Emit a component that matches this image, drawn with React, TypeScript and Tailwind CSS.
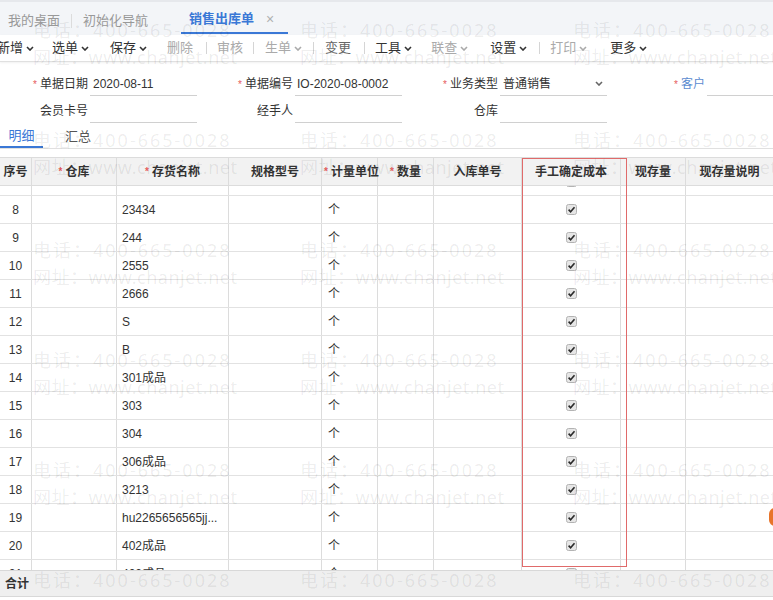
import React from "react";

const FONT = { fontFamily: '"Liberation Sans", "Noto Sans CJK SC", sans-serif' };

function Chevron({ className = "" }: { className?: string }) {
  return (
    <svg width="8" height="5" viewBox="0 0 8 5" className={`shrink-0 ${className}`}>
      <path d="M1 1 L4 4 L7 1" stroke="currentColor" strokeWidth="1.6" fill="none" />
    </svg>
  );
}

function Check() {
  return (
    <svg width="11" height="11" viewBox="0 0 11 11">
      <rect x="0.5" y="0.5" width="10" height="10" rx="2" fill="#e6e6e6" stroke="#b3b3b3" />
      <path d="M2.6 5.6 L4.6 7.7 L8.5 3.2" stroke="#2a2a2a" strokeWidth="1.6" fill="none" />
    </svg>
  );
}

const rows = [
  { n: 7, name: "2222" },
  { n: 8, name: "23434" },
  { n: 9, name: "244" },
  { n: 10, name: "2555" },
  { n: 11, name: "2666" },
  { n: 12, name: "S" },
  { n: 13, name: "B" },
  { n: 14, name: "301成品" },
  { n: 15, name: "303" },
  { n: 16, name: "304" },
  { n: 17, name: "306成品" },
  { n: 18, name: "3213" },
  { n: 19, name: "hu2265656565jj..." },
  { n: 20, name: "402成品" },
  { n: 21, name: "402成品" },
];

const GRID = "grid grid-cols-[32px_85px_112px_93px_56px_56px_88px_99px_65px_87px]";

function Star() {
  return <span className="text-[#e65c5c] mr-[3px] text-[10px]">*</span>;
}

function Watermark() {
  const cols = [33, 300, 573];
  const items: { x: number; y: number; t: string; wide: boolean }[] = [];
  for (let r = 0; r < 6; r++) {
    for (const x of cols) {
      items.push({ x, y: 30 + 110 * r - 12, t: "电话：400-665-0028", wide: true });
      if (r < 5) items.push({ x, y: 57 + 110 * r - 12, t: "网址：www.chanjet.net", wide: false });
    }
  }
  return (
    <div className="absolute inset-0 pointer-events-none overflow-hidden">
      {items.map((it, i) => (
        <div
          key={i}
          className={
            it.wide
              ? "absolute whitespace-nowrap text-[18px] leading-[24px] tracking-[2px] text-[rgba(0,0,0,0.08)]"
              : "absolute whitespace-nowrap text-[18px] leading-[24px] tracking-[0.5px] text-[rgba(0,0,0,0.08)]"
          }
          style={{ left: it.x, top: it.y, fontFamily: '"Noto Sans", "Noto Sans CJK SC", sans-serif' }}
        >
          {it.t}
        </div>
      ))}
    </div>
  );
}

export default function App() {
  return (
    <div className="relative w-[773px] h-[600px] overflow-hidden bg-white text-[#333]" style={FONT}>
      {/* Tab bar */}
      <div className="h-[35px] bg-[#f3f5f8] border-t-[2px] border-[#e6e8ec] flex items-stretch text-[13px] whitespace-nowrap">
        <div className="flex items-center pt-[4px] ml-[8px] text-[#999]">我的桌面</div>
        <div className="flex items-center pt-[4px] ml-[11px]">
          <div className="w-px h-[14px] bg-[#dcdcdc]" />
        </div>
        <div className="flex items-center pt-[4px] ml-[11px] text-[#999]">初始化导航</div>
        <div className="ml-[33px] w-[107px] shrink-0 flex items-center pt-[4px] pl-[8px] border-b-2 border-[#3a78d6] mb-[1px]">
          <span className="text-[#3a78d6] font-bold">销售出库单</span>
          <span className="ml-[12px] text-[#b0b0b0] text-[14px]">×</span>
        </div>
      </div>

      {/* Toolbar */}
      <div className="h-[27px] bg-white border-b border-[#e0e0e0] shadow-[0_1px_2px_rgba(0,0,0,0.06)] flex items-center text-[13px] whitespace-nowrap">
        <span className="-ml-[3px] flex items-center">新增<Chevron className="ml-[3px]" /></span>
        <span className="ml-[18px] flex items-center">选单<Chevron className="ml-[3px]" /></span>
        <span className="ml-[21px] flex items-center">保存<Chevron className="ml-[3px]" /></span>
        <span className="ml-[20px] text-[#aaa]">删除</span>
        <span className="ml-[13px] w-px h-[12px] bg-[#d5d5d5]" />
        <span className="ml-[10px] text-[#aaa]">审核</span>
        <span className="ml-[10px] w-px h-[12px] bg-[#d5d5d5]" />
        <span className="ml-[11px] flex items-center text-[#aaa]">生单<Chevron className="ml-[3px]" /></span>
        <span className="ml-[11px] w-px h-[12px] bg-[#d5d5d5]" />
        <span className="ml-[11px] text-[#666]">变更</span>
        <span className="ml-[13px] w-px h-[12px] bg-[#d5d5d5]" />
        <span className="ml-[10px] flex items-center">工具<Chevron className="ml-[3px]" /></span>
        <span className="ml-[19px] flex items-center text-[#aaa]">联查<Chevron className="ml-[3px]" /></span>
        <span className="ml-[22px] flex items-center">设置<Chevron className="ml-[3px]" /></span>
        <span className="ml-[12px] w-px h-[12px] bg-[#d5d5d5]" />
        <span className="ml-[10px] flex items-center text-[#aaa]">打印<Chevron className="ml-[3px]" /></span>
        <span className="ml-[23px] flex items-center">更多<Chevron className="ml-[3px]" /></span>
      </div>

      {/* Form */}
      <div className="pt-[10px] flex flex-col gap-[3px] text-[12px] whitespace-nowrap">
        <div className="h-[24px] flex">
          <div className="w-[88px] shrink-0 flex items-center justify-end"><Star />单据日期</div>
          <div className="ml-[2px] w-[107px] shrink-0 border-b border-[#d0d0d0] flex items-center pl-[3px]">2020-08-11</div>
          <div className="w-[96px] shrink-0 flex items-center justify-end"><Star />单据编号</div>
          <div className="ml-[2px] w-[107px] shrink-0 border-b border-[#d0d0d0] flex items-center pl-[2px]">IO-2020-08-0002</div>
          <div className="w-[96px] shrink-0 flex items-center justify-end"><Star />业务类型</div>
          <div className="ml-[2px] w-[107px] shrink-0 border-b border-[#d0d0d0] flex items-center pl-[3px] pr-[4px] justify-between">
            <span>普通销售</span>
            <Chevron className="text-[#666]" />
          </div>
          <div className="w-[98px] shrink-0 flex items-center justify-end text-[#5b8bd0]"><Star />客户</div>
          <div className="ml-[2px] w-[107px] shrink-0 border-b border-[#d0d0d0]" />
        </div>
        <div className="h-[24px] flex">
          <div className="w-[88px] shrink-0 flex items-center justify-end">会员卡号</div>
          <div className="ml-[2px] w-[107px] shrink-0 border-b border-[#d0d0d0]" />
          <div className="w-[96px] shrink-0 flex items-center justify-end">经手人</div>
          <div className="ml-[2px] w-[107px] shrink-0 border-b border-[#d0d0d0]" />
          <div className="w-[96px] shrink-0 flex items-center justify-end">仓库</div>
          <div className="ml-[2px] w-[107px] shrink-0 border-b border-[#d0d0d0]" />
        </div>
      </div>

      {/* Sub tabs */}
      <div className="h-[26px] flex items-stretch border-b border-[#e0e0e0] text-[13px]">
        <div className="w-[43px] flex items-center justify-center pt-[2px] border-b-2 border-[#3a78d6] text-[#3a78d6]">明细</div>
        <div className="ml-[22px] flex items-center pt-[2px] text-[#555]">汇总</div>
      </div>

      {/* Table */}
      <div className="mt-[8px] text-[12px]">
        <div className={`${GRID} h-[29px] bg-[#f2f2f2] border-t border-b border-[#dcdcdc] font-bold text-[#333] whitespace-nowrap`}>
          <div className="border-r border-[#dcdcdc] flex items-center justify-center">序号</div>
          <div className="border-r border-[#dcdcdc] flex items-center justify-center"><Star />仓库</div>
          <div className="border-r border-[#dcdcdc] flex items-center justify-center"><Star />存货名称</div>
          <div className="border-r border-[#dcdcdc] flex items-center justify-center">规格型号</div>
          <div className="border-r border-[#dcdcdc] flex items-center pl-[2px]"><Star />计量单位</div>
          <div className="border-r border-[#dcdcdc] flex items-center justify-center"><Star />数量</div>
          <div className="border-r border-[#dcdcdc] flex items-center justify-center">入库单号</div>
          <div className="border-r border-[#dcdcdc] flex items-center justify-center">手工确定成本</div>
          <div className="border-r border-[#dcdcdc] flex items-center justify-center">现存量</div>
          <div className="flex items-center justify-center">现存量说明</div>
        </div>
        <div className="h-[384px] overflow-hidden">
          <div className="-mt-[18px]">
            {rows.map((r) => (
              <div key={r.n} className={`${GRID} h-[28px] border-b border-[#e2e2e2] whitespace-nowrap`}>
                <div className="border-r border-[#dcdcdc] flex items-center justify-center">{r.n}</div>
                <div className="border-r border-[#dcdcdc]" />
                <div className="border-r border-[#dcdcdc] flex items-center pl-[5px]">{r.name}</div>
                <div className="border-r border-[#dcdcdc]" />
                <div className="border-r border-[#dcdcdc] flex items-center pl-[6px]">个</div>
                <div className="border-r border-[#dcdcdc]" />
                <div className="border-r border-[#dcdcdc]" />
                <div className="border-r border-[#dcdcdc] flex items-center justify-center"><Check /></div>
                <div className="border-r border-[#dcdcdc]" />
                <div />
              </div>
            ))}
          </div>
        </div>
        <div className="h-[27px] bg-[#efefef] border-t border-b border-[#d8d8d8] flex items-center pl-[5px] font-bold text-[12px]">合计</div>
      </div>

      {/* Red highlight box */}
      <div className="absolute left-[522px] top-[158px] w-[105px] h-[409px] border border-[#e06a6a] pointer-events-none" />

      {/* Orange floating tab */}
      <div className="absolute left-[769px] top-[508px] w-[6px] h-[18px] rounded-l-full bg-[#e8742a]" />

      <Watermark />
    </div>
  );
}
